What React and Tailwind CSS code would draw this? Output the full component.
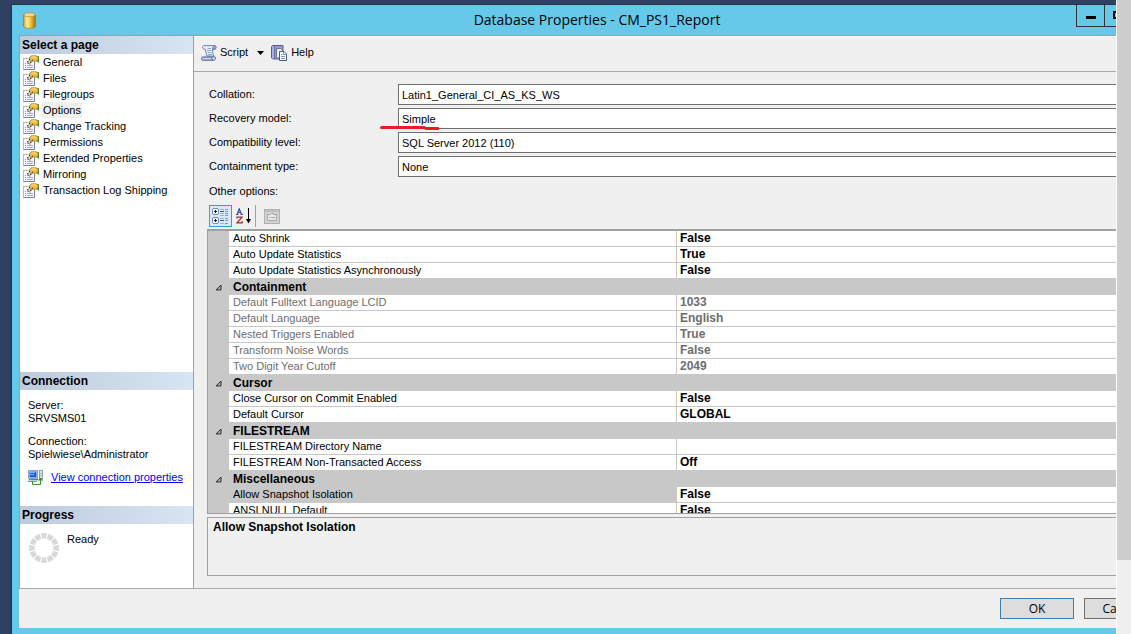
import React from "react";

const pages = [
  "General",
  "Files",
  "Filegroups",
  "Options",
  "Change Tracking",
  "Permissions",
  "Extended Properties",
  "Mirroring",
  "Transaction Log Shipping",
];

const fields = [
  { id: "collation", label: "Collation:", value: "Latin1_General_CI_AS_KS_WS" },
  { id: "recovery", label: "Recovery model:", value: "Simple", marked: true },
  { id: "compat", label: "Compatibility level:", value: "SQL Server 2012 (110)" },
  { id: "containment", label: "Containment type:", value: "None" },
];

const rows = [
  { name: "Auto Shrink", value: "False" },
  { name: "Auto Update Statistics", value: "True" },
  { name: "Auto Update Statistics Asynchronously", value: "False" },
  { category: "Containment" },
  { name: "Default Fulltext Language LCID", value: "1033", disabled: true },
  { name: "Default Language", value: "English", disabled: true },
  { name: "Nested Triggers Enabled", value: "True", disabled: true },
  { name: "Transform Noise Words", value: "False", disabled: true },
  { name: "Two Digit Year Cutoff", value: "2049", disabled: true },
  { category: "Cursor" },
  { name: "Close Cursor on Commit Enabled", value: "False" },
  { name: "Default Cursor", value: "GLOBAL" },
  { category: "FILESTREAM" },
  { name: "FILESTREAM Directory Name", value: "" },
  { name: "FILESTREAM Non-Transacted Access", value: "Off" },
  { category: "Miscellaneous" },
  { name: "Allow Snapshot Isolation", value: "False", selected: true },
  { name: "ANSI NULL Default", value: "False" },
];

function DatabaseIcon() {
  return (
    <svg width="13" height="17" viewBox="0 0 13 17" aria-hidden="true">
      <defs>
        <linearGradient id="gold" x1="0" x2="1" y1="0" y2="0">
          <stop offset="0" stopColor="#d99a1c" />
          <stop offset="0.3" stopColor="#fff3a0" />
          <stop offset="0.6" stopColor="#f0c23a" />
          <stop offset="1" stopColor="#a8690c" />
        </linearGradient>
      </defs>
      <path d="M.5 2.800v11.400c0 1.200 2.700 2.200 6 2.200s6-1 6-2.200V2.800z" fill="url(#gold)" stroke="#a8762a" strokeWidth=".7" />
      <ellipse cx="6.500" cy="2.800" rx="5.800" ry="2" fill="#f6d88a" stroke="#b4863a" strokeWidth=".7" />
    </svg>
  );
}

function PageIcon() {
  return (
    <svg width="17" height="15" viewBox="0 0 17 15" aria-hidden="true">
      <rect x=".5" y="3.500" width="11" height="11" fill="#fafaff" stroke="#b4b5bd" />
      <path d="M11.500 7v7.500H.5" fill="none" stroke="#83848e" />
      <path d="M2 8.500h1M2 10.500h1M2 12.500h1" stroke="#8587b8" />
      <path d="M4 8.500h3M4 10.500h6M4 12.500h6" stroke="#a3a5dc" />
      <path d="M13.500 1H16v7l-2.500-2z" fill="#379447" />
      <path d="M15.500 1v3" stroke="#7b8a3c" />
      <path d="M6 3 8.500.800h5L15 2.500v2L12.500 7l-2-.5-1.500-2z" fill="#f3b92c" stroke="#9c7428" strokeWidth=".7" />
      <path d="M8.500 2h4l1.500 1" stroke="#ffeca0" fill="none" />
      <path d="M4 6.500 7.500 3l3 3L7 9.500z" fill="#efe2bb" />
      <path d="M4 6h1.500v1.500H4zM6 4h1.500v1.500H6zM7 6.500h1.500V8H7zM8.500 4.800H10v1.500H8.500z" fill="#4c4232" />
      <path d="m5.500 8 1.500 1.500" stroke="#4c4232" />
    </svg>
  );
}

function ScriptIcon() {
  return (
    <svg width="16" height="16" viewBox="0 0 16 16" aria-hidden="true">
      <path d="M3 .600h10.500c2.200 0 2 3.600 0 3.600h-1.800c-.4 2.600.2 4.500 1.300 6.800H5.800C5.600 8.500 4.200 6.800 4.400 4.300 1 4.500.800.800 3 .600z" fill="#e6ecfa" stroke="#6f83b4" />
      <path d="M11.700 4.200h2.200c1.400-.4 1.400-3-.2-3.400-1.700.2-2 1.600-2 3.400z" fill="#a9b8dc" stroke="#4d608c" strokeWidth=".8" />
      <path d="M1.800 12h9.500c-.8 1.200-.2 2.800 1 3.200H1.800c-1.700 0-1.700-3.200 0-3.200z" fill="#c9d4ee" stroke="#44567f" />
      <path d="M11.300 12c2-.4 3-.4 3.200.8.100 1.400-.8 2.400-2.200 2.400" fill="#dfe7f8" stroke="#44567f" />
      <path d="M6.500 3.500h3.500M6 5.500h4M6.500 7.500h4M7 9.500h4" stroke="#93a6d6" />
    </svg>
  );
}

function HelpIcon() {
  return (
    <svg width="16" height="16" viewBox="0 0 16 16" aria-hidden="true">
      <path d="M.5 1.500 2 .5h10v13.500H2L.5 13z" fill="#9a9bcd" stroke="#5a5b96" />
      <path d="M3.500 1v12.500" stroke="#6c6dab" />
      <path d="M2 1.500v12" stroke="#c6c7ea" />
      <path d="M5.500 3.500h4l2 2v7.500h-6z" fill="#eef3fc" stroke="#62769c" />
      <path d="M8.500 6.500h4.500l2.500 2.500v6.500h-7z" fill="#fff" stroke="#465c84" />
      <path d="M12.500 7v2.500h3M10 9.500h1.500M10 11.500h4M10 13.500h4" fill="none" stroke="#8197c2" />
    </svg>
  );
}

function ServerIcon() {
  return (
    <svg width="16" height="15" viewBox="0 0 16 15" aria-hidden="true">
      <rect x=".5" y=".5" width="9" height="8" fill="#dce6f6" stroke="#8fa2c4" />
      <rect x="1.500" y="1.500" width="7" height="6" fill="#1c62d6" />
      <path d="M2 2.500h5M2 4.500h4" stroke="#76b0ff" />
      <path d="M1 9.500h9" stroke="#6c7da0" />
      <path d="M0 10.500h9.500" stroke="#c5d0e2" />
      <path d="M0 11.500h9" stroke="#8494b2" />
      <rect x="11.500" y=".5" width="3" height="8" fill="#e6ecf6" stroke="#8c9cb8" />
      <path d="M12 3.500h2M12 5.500h2" stroke="#9fb0cc" />
      <path d="M4.500 11v3.500h8V9" fill="none" stroke="#2c9a1e" />
      <path d="m9.500 10.500 3-3 3 3z" fill="#2c9a1e" />
    </svg>
  );
}

function Spinner() {
  return (
    <svg width="30" height="30" viewBox="0 0 30 30" aria-hidden="true">
      <circle cx="15" cy="15" r="12.200" fill="none" stroke="#d9d9d9" strokeWidth="5.400" pathLength="120" strokeDasharray="8.400 1.600" strokeDashoffset="4.200" />
    </svg>
  );
}

function CategorizedIcon() {
  return (
    <svg width="17" height="17" viewBox="0 0 17 17" aria-hidden="true">
      <rect x=".5" y=".5" width="6" height="6" rx="1.500" fill="#fff" stroke="#6d8cb8" />
      <rect x=".5" y="9.500" width="6" height="6" rx="1.500" fill="#fff" stroke="#6d8cb8" />
      <path d="M2 3.500h3M3.500 2v3M2 12.500h3M3.500 11v3" stroke="#111" />
      <path d="M8 3.500h4M8 12.500h4" stroke="#4c5870" />
      <path d="M8 1.500h4M8 5.500h4M8 7.500h4M8 10.500h4M8 15.500h4" stroke="#a0b2cc" />
      <path d="M13 1.500h3M13 3.500h3M13 5.500h3M13 7.500h3M13 10.500h3M13 12.500h3M13 15.500h3" stroke="#8496b4" />
    </svg>
  );
}

function SortArrow() {
  return (
    <svg width="5" height="16" viewBox="0 0 5 16" aria-hidden="true">
      <path d="M2.500 0v14" stroke="#000" />
      <path d="M0 11h5l-2.500 4.500z" fill="#000" />
    </svg>
  );
}

function PagesIcon() {
  return (
    <svg width="16" height="15" viewBox="0 0 16 15" aria-hidden="true">
      <rect x=".5" y=".5" width="15" height="14" fill="#d2d2d2" stroke="#b0b0b0" />
      <path d="M1 2h14" stroke="#c0c0c0" strokeWidth="2" />
      <path d="M3.500 5.500h3l1-1h2v1h3v6h-9z" fill="#e8e8e8" stroke="#a8a8a8" />
      <path d="M5 8.500h1M7 8.500h4" stroke="#a4a4a4" />
    </svg>
  );
}

function Expander() {
  return (
    <svg className="mx-auto block" width="7" height="7" viewBox="0 0 7 7" aria-hidden="true">
      <path d="M6 1v5H1z" fill="#a8a8a8" stroke="#303030" />
    </svg>
  );
}

function SectionHeader({ children }) {
  return (
    <h2 className="h-[18px] shrink-0 bg-linear-to-r from-[#bccbdc] to-[#d8e5f3] pl-[2px] text-[12px] leading-[18px] font-bold">
      {children}
    </h2>
  );
}

function Sidebar() {
  return (
    <aside className="flex w-[175px] shrink-0 flex-col border-x border-[#a0a0a0] bg-white">
      <SectionHeader>Select a page</SectionHeader>
      <nav className="flex-1">
        <ul>
          {pages.map((page) => (
            <li key={page} className="flex h-4 items-center gap-[2px] pl-[3px]">
              <PageIcon />
              <a
                href="#"
                className={"px-px leading-4 whitespace-nowrap " + (page === "Options" ? "bg-[#f0f0f0]" : "")}
              >
                {page}
              </a>
            </li>
          ))}
        </ul>
      </nav>
      <SectionHeader>Connection</SectionHeader>
      <div className="flex h-[116px] flex-col pt-[9px] pl-2 leading-[13px]">
        <p>Server:</p>
        <p>SRVSMS01</p>
        <p className="mt-[10px]">Connection:</p>
        <p>Spielwiese\Administrator</p>
        <div className="mt-[9px] flex items-center gap-[7px]">
          <ServerIcon />
          <a href="#" className="whitespace-nowrap text-[#0000ff] underline">
            View connection properties
          </a>
        </div>
      </div>
      <SectionHeader>Progress</SectionHeader>
      <div className="flex h-16 items-start gap-2 pt-[9px] pl-[9px]">
        <Spinner />
        <p className="leading-[13px]">Ready</p>
      </div>
    </aside>
  );
}

function PropertyGrid() {
  return (
    <div className="min-h-0 flex-1 overflow-hidden border-t-2 border-b border-l border-[#a0a0a0] bg-white">
      <table className="w-full table-fixed border-separate border-spacing-0">
        <colgroup>
          <col className="w-[21px]" />
          <col className="w-[448px]" />
          <col />
        </colgroup>
        <tbody>
          {rows.map((row) =>
            row.category ? (
              <tr key={row.category} className="h-4 bg-[#c8c8c8]">
                <td className="h-4 p-0">
                  <Expander />
                </td>
                <th colSpan={2} className="h-4 p-0 pl-1 text-left text-[12px] leading-4 font-bold">
                  {row.category}
                </th>
              </tr>
            ) : (
              <tr key={row.name} className={"h-4 " + (row.disabled ? "text-[#6d6d6d]" : "")}>
                <td className="h-4 bg-[#c8c8c8] p-0" />
                <td
                  className={
                    "h-4 border-r border-b border-[#c8c8c8] p-0 pl-1 leading-[15px] whitespace-nowrap " +
                    (row.selected ? "bg-[#c8c8c8]" : "")
                  }
                >
                  {row.name}
                </td>
                <td className="h-4 border-b border-[#c8c8c8] p-0 pl-[3px] text-[12px] leading-[15px] font-bold">
                  {row.value}
                </td>
              </tr>
            )
          )}
        </tbody>
      </table>
    </div>
  );
}

function TitleBar() {
  return (
    <header className="flex h-[30px] shrink-0 items-start">
      <div className="flex h-[30px] w-[106px] items-center pl-[11px]">
        <DatabaseIcon />
      </div>
      <h1 className="flex-1 text-center font-['Open_Sans',sans-serif] text-[14px] leading-[30px]">
        Database Properties - CM_PS1_Report
      </h1>
      <div className="flex h-[22px] w-[106px] border-b border-l border-[#333]">
        <button aria-label="Minimize" className="flex w-7 items-start justify-center border-r border-[#333] pt-[11px]">
          <svg width="10" height="3" aria-hidden="true">
            <rect width="10" height="3" />
          </svg>
        </button>
        <button aria-label="Maximize" className="flex w-7 items-start justify-center border-r border-[#333] pt-[6px]">
          <svg width="11" height="8" viewBox="0 0 11 8" aria-hidden="true">
            <path d="M1 1h9v6H1z" fill="none" stroke="#000" strokeWidth="2" />
          </svg>
        </button>
        <button aria-label="Close" className="flex-1 bg-[#c75050]" />
      </div>
    </header>
  );
}

export default function App() {
  return (
    <div className="flex h-screen min-h-[560px] overflow-hidden bg-white font-['Liberation_Sans',Arial,sans-serif] text-[11px] text-black">
      <div className="mr-px flex min-w-0 flex-1 overflow-hidden bg-[#2e4163] pt-1 pl-[11px]">
        <div className="mr-[-66px] flex min-w-0 flex-1 flex-col border-t border-l border-[#263248] bg-[#66c9ea] pb-[6px]">
          <TitleBar />
          <div className="mr-[7px] ml-[7px] flex min-h-0 flex-1 flex-col border-t border-[#8fa3ad] bg-[#f0f0f0]">
            <div className="flex min-h-0 flex-1 border-b border-[#a8a8a8]">
              <Sidebar />
              <main className="flex min-w-0 flex-1 flex-col border-t border-white">
                <div className="flex h-[35px] shrink-0 items-center border-b border-[#a8a8a8] pb-[3px] pl-[7px]">
                  <button className="flex items-center gap-[3px]">
                    <ScriptIcon />
                    Script
                  </button>
                  <button aria-label="Script options" className="pr-[7px] pl-[9px]">
                    <svg width="7" height="4" viewBox="0 0 7 4" aria-hidden="true">
                      <path d="M0 0h7L3.500 4z" />
                    </svg>
                  </button>
                  <button className="flex items-center gap-1">
                    <HelpIcon />
                    Help
                  </button>
                </div>
                <div className="flex min-h-0 flex-1 flex-col pt-3 pr-4 pb-3 pl-[13px]">
                  <div className="flex flex-col gap-[3px]">
                    {fields.map((field) => (
                      <div key={field.id} className="relative flex items-center">
                        <label htmlFor={field.id} className="w-[191px] shrink-0 pl-[2px]">
                          {field.label}
                        </label>
                        <select
                          id={field.id}
                          className="h-[21px] min-w-0 flex-1 appearance-none border border-[#707070] bg-white pt-px pl-[3px] leading-[18px]"
                        >
                          <option>{field.value}</option>
                        </select>
                        {field.marked && (
                          <svg className="absolute top-[17px] left-[173px]" width="60" height="6" viewBox="0 0 60 6" aria-hidden="true">
                            <path d="M1.500 2.500H44l2 1h12" fill="none" stroke="#ed1c24" strokeWidth="3" strokeLinecap="round" />
                          </svg>
                        )}
                      </div>
                    ))}
                  </div>
                  <p className="mt-2 pl-[2px] leading-[13px]">Other options:</p>
                  <div className="mt-[7px] mb-[2px] flex h-[22px] items-center pl-[2px]">
                    <button
                      aria-label="Categorized"
                      className="flex h-[22px] w-[23px] items-center justify-center border border-[#2ea0da] bg-[#d8eaf9]"
                    >
                      <CategorizedIcon />
                    </button>
                    <button aria-label="Alphabetical" className="flex h-[22px] w-[23px] items-center justify-center gap-[3px]">
                      <svg width="7" height="16" viewBox="0 0 7 16" aria-hidden="true">
                        <path d="M0 6.500h2.500M4.500 6.500H7M1.200 6.500 3.200.800l2.300 5.700M2 4.500h3" fill="none" stroke="#2a50a8" strokeWidth="1.200" />
                        <path d="M1 10.500V9.200h5L1 14.800h5.200v-1.500" fill="none" stroke="#a03030" strokeWidth="1.300" />
                      </svg>
                      <SortArrow />
                    </button>
                    <span className="h-[22px] w-px bg-[#a0a0a0]" />
                    <button aria-label="Property pages" disabled className="ml-2">
                      <PagesIcon />
                    </button>
                  </div>
                  <PropertyGrid />
                  <section className="mt-[3px] h-[59px] shrink-0 border border-[#a0a0a0] pl-[5px]">
                    <h3 className="text-[12px] leading-[18px] font-bold">Allow Snapshot Isolation</h3>
                  </section>
                </div>
              </main>
            </div>
            <footer className="flex h-[39px] shrink-0 items-start justify-end gap-[10px] pt-[9px] pr-[17px] font-['Open_Sans',sans-serif] text-[12px]">
              <button className="h-[21px] w-[74px] border border-[#3c7fb1] bg-[#dddddd] leading-[19px]">OK</button>
              <button className="h-[21px] w-[74px] border border-[#707070] bg-[#dddddd] leading-[19px]">Cancel</button>
            </footer>
          </div>
        </div>
      </div>
      <div className="w-[14px] shrink-0 bg-[#f0f0f0]">
        <div className="h-[560px] bg-[#cdcdcd]" />
      </div>
    </div>
  );
}
